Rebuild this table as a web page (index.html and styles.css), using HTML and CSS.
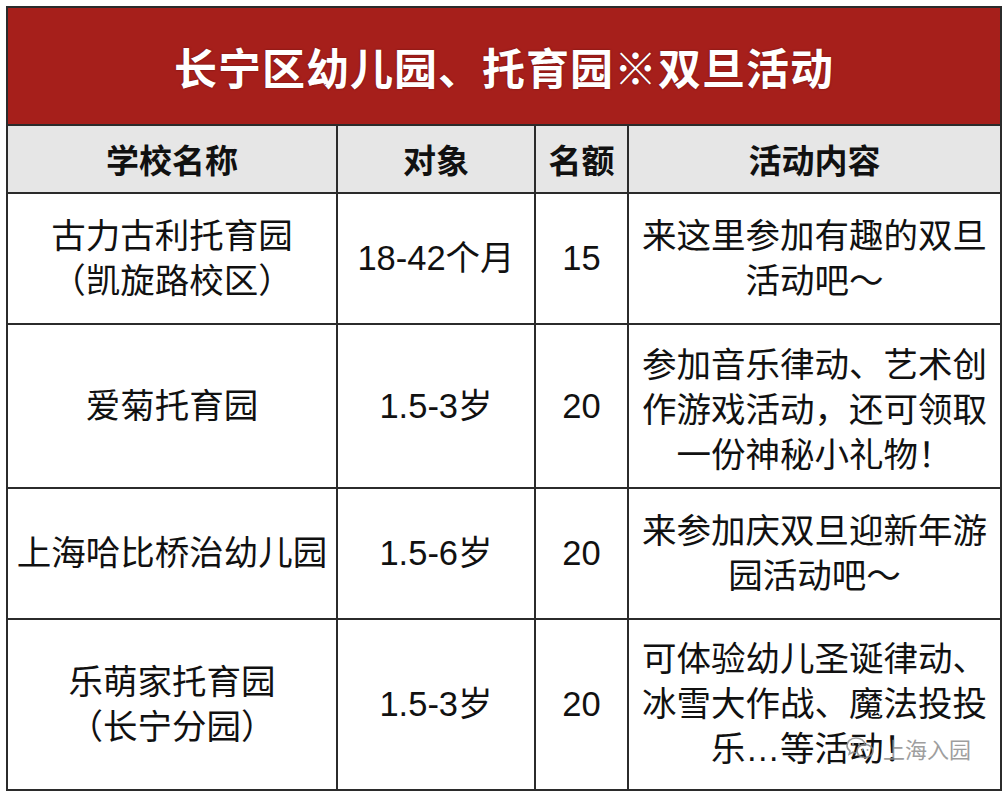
FILE: index.html
```html
<!DOCTYPE html>
<html lang="zh-CN">
<head>
<meta charset="utf-8">
<link rel="stylesheet" href="styles.css">
</head>
<body>
<div class="page">
  <table class="sheet">
    <colgroup>
      <col class="c1"><col class="c2"><col class="c3"><col class="c4">
    </colgroup>
    <tr class="title-row"><td colspan="4" class="title">长宁区幼儿园、托育园※双旦活动</td></tr>
    <tr class="head-row"><th>学校名称</th><th>对象</th><th>名额</th><th>活动内容</th></tr>
    <tr class="r1"><td>古力古利托育园<br>（凯旋路校区）</td><td>18-42个月</td><td>15</td><td>来这里参加有趣的双旦<br>活动吧～</td></tr>
    <tr class="r2"><td>爱菊托育园</td><td>1.5-3岁</td><td>20</td><td class="shift">参加音乐律动、艺术创<br>作游戏活动，还可领取<br>一份神秘小礼物！</td></tr>
    <tr class="r3"><td>上海哈比桥治幼儿园</td><td>1.5-6岁</td><td>20</td><td>来参加庆双旦迎新年游<br>园活动吧～</td></tr>
    <tr class="r4"><td>乐萌家托育园<br>（长宁分园）</td><td>1.5-3岁</td><td>20</td><td>可体验幼儿圣诞律动、<br>冰雪大作战、魔法投投<br>乐…等活动！</td></tr>
  </table>
  <div class="watermark">
    <svg class="wm-icon" width="30" height="26" viewBox="0 0 30 26">
      <path d="M11 3C5.5 3 2 6.6 2 10.6c0 2.3 1.2 4.2 3 5.5l-0.8 3 3.3-1.8c1.1 0.3 2.2 0.5 3.5 0.5" fill="none" stroke="#8a8a8a" stroke-width="1.6"/>
      <path d="M11 3c5 0 8.6 3 9 6.6" fill="none" stroke="#8a8a8a" stroke-width="1.6"/>
      <ellipse cx="20" cy="16" rx="8" ry="6.5" fill="none" stroke="#8a8a8a" stroke-width="1.6"/>
      <circle cx="8" cy="9" r="1.2" fill="#8a8a8a"/>
      <circle cx="14" cy="9" r="1.2" fill="#8a8a8a"/>
      <circle cx="17.5" cy="15" r="1" fill="#8a8a8a"/>
      <circle cx="22.5" cy="15" r="1" fill="#8a8a8a"/>
    </svg>
    <span class="wm-text">上海入园</span>
  </div>
</div>
</body>
</html>
```

FILE: styles.css
```css
html, body {
  margin: 0;
  padding: 0;
  background: #ffffff;
}
.page {
  position: relative;
  width: 1006px;
  height: 794px;
  padding: 6px 0 0 6px;
  box-sizing: border-box;
}
.sheet {
  border-collapse: collapse;
  table-layout: fixed;
  width: 994px;
  font-family: "Liberation Sans", "Noto Sans CJK SC", sans-serif;
  color: #111111;
}
.c1 { width: 330px; }
.c2 { width: 198px; }
.c3 { width: 93px; }
.c4 { width: 373px; }
.sheet td, .sheet th {
  border: 2px solid #2b2b2b;
  text-align: center;
  vertical-align: middle;
  padding: 0;
  font-size: 34.5px;
  line-height: 45px;
  font-weight: 400;
}
.title-row { height: 118px; }
.sheet td.title {
  background: #a61f1b;
  color: #ffffff;
  font-family: "Noto Sans CJK SC", sans-serif;
  font-size: 43px;
  font-weight: 700;
  letter-spacing: 1px;
  text-shadow: 0 0 2px rgba(60, 0, 0, 0.6);
  padding-top: 2px;
}
.head-row { height: 68px; }
.head-row th {
  background: #e6e6e6;
  font-family: "Noto Sans CJK SC", sans-serif;
  font-weight: 700;
  font-size: 33px;
}
.r1 { height: 131px; }
.r2 { height: 164px; }
.r3 { height: 131px; }
.r4 { height: 171px; }
.sheet td:last-child { padding: 0 3px; }
.sheet td.shift { padding-top: 8px; }
.watermark {
  position: absolute;
  left: 845px;
  top: 735px;
  display: flex;
  align-items: center;
  gap: 8px;
  opacity: 0.85;
}
.wm-text {
  font-family: "Noto Sans CJK SC", sans-serif;
  font-size: 22px;
  color: #8e8e8e;
  line-height: 26px;
}
```
